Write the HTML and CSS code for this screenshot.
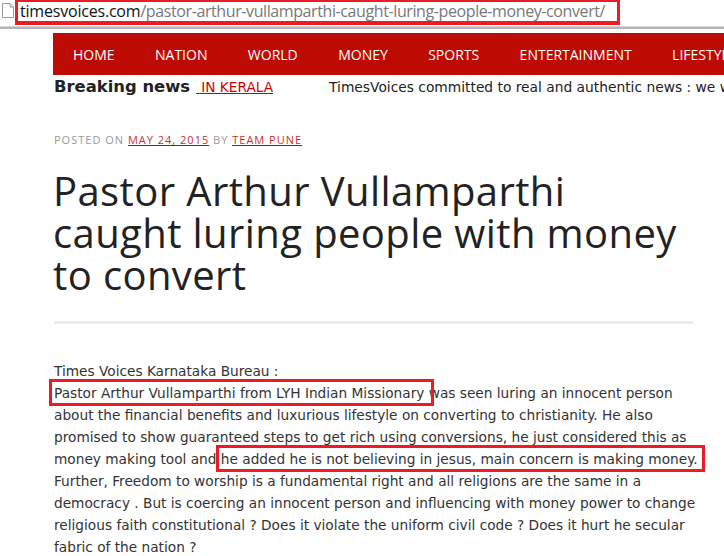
FILE: index.html
```html
<!DOCTYPE html>
<html>
<head>
<meta charset="utf-8">
<link rel="stylesheet" href="styles.css">
</head>
<body>
<div class="addressbar">
  <svg class="pageicon" width="12" height="15" viewBox="0 0 12 15"><path d="M0.5 0.5 H8 L11.5 4 V14.5 H0.5 Z" fill="#fff" stroke="#9a9a9a"/><path d="M8 0.5 V4 H11.5" fill="none" stroke="#9a9a9a"/></svg>
  <span class="url"><span class="host">timesvoices.com</span><span class="path">/pastor-arthur-vullamparthi-caught-luring-people-money-convert/</span></span>
</div>
<div class="page">
  <nav class="menu">
    <a class="item">HOME</a>
    <a class="item">NATION</a>
    <a class="item">WORLD</a>
    <a class="item">MONEY</a>
    <a class="item">SPORTS</a>
    <a class="item">ENTERTAINMENT</a>
    <a class="item">LIFESTYLE</a>
  </nav>
  <div class="breaking">
    <span class="blabel">Breaking news</span>
    <span class="tickerclip"><a class="tlink">CONVERSION IN KERALA</a></span>
    <span class="ticker">TimesVoices committed to real and authentic news : we will bring you the truth</span>
  </div>
  <div class="meta">POSTED ON <a class="mlink">MAY 24, 2015</a> BY <a class="mlink">TEAM PUNE</a></div>
  <h1 class="title">Pastor Arthur Vullamparthi caught luring people with money to convert</h1>
  <hr class="sep">
  <div class="body">Times Voices Karnataka Bureau :<br><span class="mark">Pastor Arthur Vullamparthi from LYH Indian Missionary </span>was seen luring an innocent person about the financial benefits and luxurious lifestyle on converting to christianity. He also promised to show guaranteed steps to get rich using conversions, he just considered this as money making tool and <span class="mark mark-end">he added he is not believing in jesus, main concern is making money.</span> Further, Freedom to worship is a fundamental right and all religions are the same in a democracy . But is coercing an innocent person and influencing with money power to change religious faith constitutional ? Does it violate the uniform civil code ? Does it hurt he secular fabric of the nation ?</div>
</div>
</body>
</html>
```
FILE: styles.css
```css
html, body {
  margin: 0;
  padding: 0;
  background: #fff;
  overflow: hidden;
}
body {
  width: 724px;
  height: 556px;
}
.addressbar {
  height: 26px;
  display: flex;
  align-items: flex-start;
  border-bottom: 1px solid #d4d4d4;
  box-shadow: 0 2px 0 #b6b6b6;
}
.pageicon {
  margin: 3px 1px 0 2px;
  flex: none;
}
.url {
  border: 3px solid #ed1c24;
  border-top-width: 2px;
  border-bottom-width: 4px;
  padding: 0 12px 0 2px;
  height: 19px;
  font-family: "Open Sans", "Liberation Sans", sans-serif;
  font-size: 16px;
  line-height: 19px;
  white-space: nowrap;
  letter-spacing: -0.2px;
}
.host { color: #111; }
.path { color: #777; letter-spacing: -0.4px; }
.page {
  padding-left: 53px;
}
.menu {
  margin-top: 6px;
  height: 42px;
  background: #bd0a03;
  display: flex;
  align-items: center;
  padding-left: 20px;
  gap: 40.4px;
  white-space: nowrap;
  overflow: hidden;
}
.item {
  font-family: "Open Sans", sans-serif;
  font-size: 14px;
  color: #fff;
  padding-top: 1px;
}
.breaking {
  height: 23px;
  display: flex;
  align-items: center;
  white-space: nowrap;
  overflow: hidden;
  margin-bottom: 2px;
}
.blabel {
  font-family: "DejaVu Sans", sans-serif;
  font-weight: bold;
  font-size: 16.4px;
  color: #222;
  flex: none;
  margin-left: 1px;
}
.tickerclip {
  width: 77px;
  margin-left: 6px;
  overflow: hidden;
  flex: none;
  font-family: "DejaVu Sans", sans-serif;
  font-size: 13.7px;
  direction: rtl;
}
.tlink {
  direction: ltr;
  unicode-bidi: bidi-override;
  color: #c00;
  text-decoration: underline;
}
.ticker {
  margin-left: 56px;
  font-family: "DejaVu Sans", sans-serif;
  font-size: 13.8px;
  color: #222;
}
.meta {
  margin-top: 34px;
  font-family: "Open Sans", sans-serif;
  font-size: 11px;
  letter-spacing: 1px;
  color: #999;
  line-height: 15px;
  padding-left: 1px;
}
.mlink {
  color: #c9302c;
  text-decoration: underline;
  text-decoration-color: #c00;
}
.title {
  margin: 23px 0 0 0;
  width: 636px;
  font-family: "Open Sans", sans-serif;
  font-weight: normal;
  font-size: 40px;
  line-height: 42px;
  color: #222;
  letter-spacing: 0.4px;
}
.sep {
  margin: 25px 0 0 1px;
  width: 639px;
  height: 3px;
  border: 0;
  background: #e9ecee;
}
.body {
  margin-top: 36px;
  width: 650px;
  font-family: "DejaVu Sans", sans-serif;
  font-size: 13.7px;
  line-height: 22px;
  color: #333;
  padding-left: 1px;
}
.mark {
  outline: 3px solid #ed1c24;
  outline-offset: 2px;
  padding-top: 1px;
}
.mark-end {
  padding-right: 2px;
}
```
